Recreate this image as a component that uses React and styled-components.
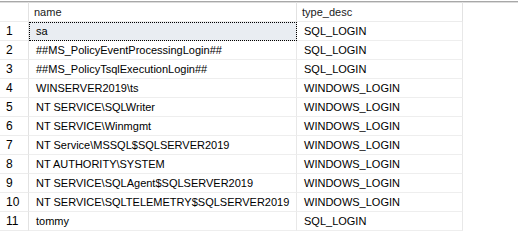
import React from 'react'
import styled, { createGlobalStyle } from 'styled-components'

const GlobalStyle = createGlobalStyle`
  html, body {
    margin: 0;
    padding: 0;
    background: #ffffff;
  }
  body {
    font-family: "Liberation Sans", Arial, sans-serif;
    font-size: 11px;
    color: #000000;
  }
`

const rows = [
  ['sa', 'SQL_LOGIN'],
  ['##MS_PolicyEventProcessingLogin##', 'SQL_LOGIN'],
  ['##MS_PolicyTsqlExecutionLogin##', 'SQL_LOGIN'],
  ['WINSERVER2019\\ts', 'WINDOWS_LOGIN'],
  ['NT SERVICE\\SQLWriter', 'WINDOWS_LOGIN'],
  ['NT SERVICE\\Winmgmt', 'WINDOWS_LOGIN'],
  ['NT Service\\MSSQL$SQLSERVER2019', 'WINDOWS_LOGIN'],
  ['NT AUTHORITY\\SYSTEM', 'WINDOWS_LOGIN'],
  ['NT SERVICE\\SQLAgent$SQLSERVER2019', 'WINDOWS_LOGIN'],
  ['NT SERVICE\\SQLTELEMETRY$SQLSERVER2019', 'WINDOWS_LOGIN'],
  ['tommy', 'SQL_LOGIN'],
]

const App = () => {
  return (
    <>
      <GlobalStyle />
      <ResultsGrid>
        <HeaderRow>
          <HeadCell width={29}></HeadCell>
          <HeadCell width={268}>name</HeadCell>
          <HeadCell width={166}>type_desc</HeadCell>
        </HeaderRow>
        {rows.map((r, i) => (
          <Row key={i}>
            <NumCell>{i + 1}</NumCell>
            <Cell width={268} selected={i === 0}>{r[0]}</Cell>
            <Cell width={166}>{r[1]}</Cell>
          </Row>
        ))}
      </ResultsGrid>
    </>
  )
}

export default App

const ResultsGrid = styled.div`
  width: 518px;
  height: 246px;
  padding-top: 1px;
  box-sizing: border-box;
  background: #ffffff;
`

const HeaderRow = styled.div`
  display: flex;
  height: 20px;
  border-top: 1px solid #a8a8a8;
  box-shadow: inset 0 1px 0 #dcdcdc;
`

const HeadCell = styled.div`
  width: ${p => p.width}px;
  flex: none;
  box-sizing: border-box;
  display: flex;
  align-items: center;
  padding: 0 5px;
  border-right: 1px solid #e2e2e2;
  border-bottom: 1px solid #ececec;
  color: #1a1a1a;
`

const Row = styled.div`
  display: flex;
  height: 19px;
`

const NumCell = styled.div`
  width: 29px;
  flex: none;
  box-sizing: border-box;
  display: flex;
  align-items: center;
  padding-left: 6px;
  border-right: 1px solid #e2e2e2;
  border-bottom: 1px solid #ececec;
  font-size: 12px;
`

const Cell = styled.div`
  width: ${p => p.width}px;
  flex: none;
  box-sizing: border-box;
  display: flex;
  align-items: center;
  padding-left: 7px;
  white-space: nowrap;
  overflow: hidden;
  border-right: 1px solid #e8e8e8;
  border-bottom: 1px solid #eeeeee;
  background: ${p => (p.selected ? '#e9edf2' : 'transparent')};
  outline: ${p => (p.selected ? '1px dotted #000000' : 'none')};
  outline-offset: -1px;
`
